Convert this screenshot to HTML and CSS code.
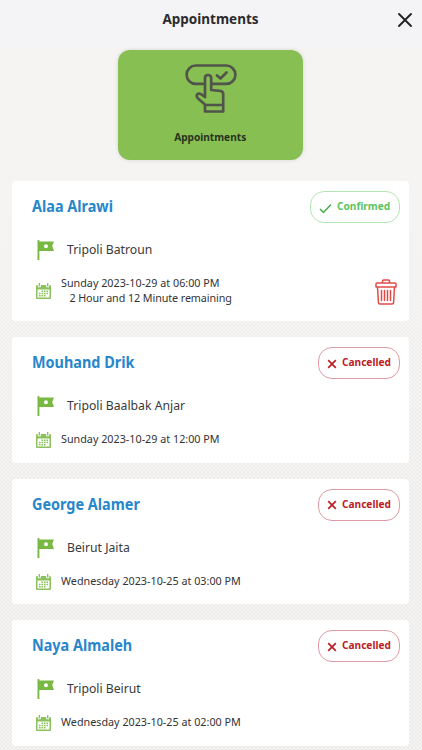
FILE: index.html
```html
<!DOCTYPE html>
<html lang="en">
<head>
<meta charset="utf-8">
<title>Appointments</title>
<link rel="stylesheet" href="styles.css">
</head>
<body>
<svg class="defs" aria-hidden="true">
  <symbol id="flag" viewBox="0 0 18 20"><path fill="currentColor" fill-rule="evenodd" d="M.5.3Q1.500-.3 2.400.3V1.500H17L15.200 6 17 10.900H2.400V20H.5zM9 4.200a2 2 0 1 0 0 4 2 2 0 0 0 0-4z"/></symbol>
  <symbol id="calendar" viewBox="0 0 15 16"><path fill="currentColor" fill-rule="evenodd" d="M1.200 2H1.800V4.300H4.800V2H10.200V4.300H13.200V2H13.800Q15 2 15 3.200V14.800Q15 16 13.800 16H1.200Q0 16 0 14.800V3.200Q0 2 1.200 2zM1.500 6.500V14.500H13.500V6.500z"/><path stroke="currentColor" stroke-width="1.300" d="M3.300 0V3.500M11.700 0V3.500"/><path fill="currentColor" d="M5.500 7.500h1.600v1.600H5.500zM8 7.500h1.600v1.600H8zM10.500 7.500h1.600v1.600h-1.600zM3 9.800h1.600v1.500H3zM5.500 9.800h1.600v1.500H5.500zM8 9.800h1.600v1.500H8zM10.500 9.800h1.600v1.500h-1.600zM3 12h1.600v1.500H3zM5.500 12h1.600v1.500H5.500zM8 12h1.600v1.500H8z"/></symbol>
  <symbol id="cross" viewBox="0 0 10 10"><path fill="none" stroke="currentColor" stroke-width="1.700" d="M1.200 1.200 8.800 8.800M8.800 1.200 1.200 8.800"/></symbol>
</svg>
<header class="topbar">
  <h1>Appointments</h1>
  <svg class="close" viewBox="0 0 16 16"><path fill="none" stroke="currentColor" stroke-width="1.900" stroke-linecap="round" d="M2 2 14 14M14 2 2 14"/></svg>
</header>
<main>
  <section class="tile">
    <svg class="tap" viewBox="0 0 52 50" fill="none" stroke="currentColor" stroke-width="2.700" stroke-linejoin="round" stroke-linecap="round">
      <path d="M19 19.900H10.800A9.200 9.200 0 0 1 10.800 1.500H41.200A9.200 9.200 0 0 1 41.200 19.900H27M32 11.500 35.500 14.500 41.500 8.500"/>
      <path d="M20 40.500 13 34.500Q10.500 31.500 12.500 30Q15 28.500 20 33V14Q20 11 23 11T26.200 14V26L35 26.800Q38.200 27.200 38.200 30V47.500H20zM20 41H38"/>
    </svg>
    <span class="tile-label">Appointments</span>
  </section>
  <div class="list">
    <article class="card card-tall">
      <div class="head"><h2>Alaa Alrawi</h2><span class="status confirmed"><svg viewBox="0 0 13 11"><path fill="none" stroke="currentColor" stroke-width="1.500" d="M1 6 4.500 9.500 12 1.500"/></svg><b>Confirmed</b></span></div>
      <div class="place"><svg><use href="#flag"/></svg><span>Tripoli Batroun</span></div>
      <div class="time"><svg class="cal"><use href="#calendar"/></svg><p>Sunday 2023-10-29 at 06:00 PM<br><span class="remaining">2 Hour and 12 Minute remaining</span></p>
        <svg class="trash" viewBox="0 0 22 26" fill="none" stroke="currentColor" stroke-width="1.500" stroke-linejoin="round" stroke-linecap="round"><path d="M7.500 4V2Q7.500 1 8.500 1H13.500Q14.500 1 14.500 2V4M2 4H20Q21 4 21 5V8H1V5Q1 4 2 4zM2.500 8 3.400 23.500Q3.500 25 5 25H17Q18.500 25 18.600 23.500L19.500 8M6.500 11.500V21.500M9.500 11.500V21.500M12.500 11.500V21.500M15.500 11.500V21.500"/></svg>
      </div>
    </article>
    <article class="card">
      <div class="head"><h2>Mouhand Drik</h2><span class="status cancelled"><svg><use href="#cross"/></svg><b>Cancelled</b></span></div>
      <div class="place"><svg><use href="#flag"/></svg><span>Tripoli Baalbak Anjar</span></div>
      <div class="time"><svg class="cal"><use href="#calendar"/></svg><p>Sunday 2023-10-29 at 12:00 PM</p></div>
    </article>
    <article class="card">
      <div class="head"><h2>George Alamer</h2><span class="status cancelled"><svg><use href="#cross"/></svg><b>Cancelled</b></span></div>
      <div class="place"><svg><use href="#flag"/></svg><span>Beirut Jaita</span></div>
      <div class="time"><svg class="cal"><use href="#calendar"/></svg><p>Wednesday 2023-10-25 at 03:00 PM</p></div>
    </article>
    <article class="card">
      <div class="head"><h2>Naya Almaleh</h2><span class="status cancelled"><svg><use href="#cross"/></svg><b>Cancelled</b></span></div>
      <div class="place"><svg><use href="#flag"/></svg><span>Tripoli Beirut</span></div>
      <div class="time"><svg class="cal"><use href="#calendar"/></svg><p>Wednesday 2023-10-25 at 02:00 PM</p></div>
    </article>
  </div>
</main>
</body>
</html>
```
FILE: styles.css
```css
* { box-sizing: border-box; margin: 0; }
body {
  height: 750px;
  overflow: hidden;
  font-family: "Noto Sans", "Open Sans", sans-serif;
  color: #2b2b2d;
  background:
    linear-gradient(#f5f4f2 0 170px, transparent 500px),
    radial-gradient(circle, #ebe9e7 0.6px, transparent 1.2px) 0 0 / 4px 4px,
    radial-gradient(circle, #ebe9e7 0.6px, transparent 1.2px) 2px 2px / 4px 4px,
    #f6f5f4;
}
.defs { display: none; }
svg { flex: none; }
.topbar {
  height: 48px;
  padding: 0 9px 10px 24px;
  display: flex;
  align-items: center;
  background: #f4f4f7;
}
h1 { flex: 1; text-align: center; font-size: 14.5px; font-weight: 700; line-height: 20px; margin-top: -2px; transform: scaleX(.93); }
.close { width: 16px; height: 16px; color: #222; margin-top: 2px; }
.tile {
  width: 185px;
  height: 110px;
  margin: 2px auto 21px 118px;
  padding-top: 14px;
  border-radius: 12px;
  background: #87bf52;
  box-shadow: 0 0 4px #0002;
  display: flex;
  flex-direction: column;
  align-items: center;
}
.tap { width: 52px; height: 50px; color: #50544a; }
.tile-label { margin-top: 15px; font-size: 11px; line-height: 16px; font-weight: 700; transform: scaleX(.92); color: #29321f; }
.list { padding: 0 13px 0 12px; display: flex; flex-direction: column; gap: 16px; }
.card {
  height: 125.600px;
  padding: 10px 9px 0 20px;
  border-radius: 4px;
  background: #fff;
}
.card-tall { height: 140.300px; }
.head { height: 32px; display: flex; align-items: flex-start; justify-content: space-between; }
h2 { font-size: 15.5px; line-height: 30px; font-weight: 700; transform: scaleX(.93); transform-origin: left; color: #2886cb; }
.status {
  height: 32px;
  border: 1px solid;
  border-radius: 14px;
  display: flex;
  align-items: center;
  padding-bottom: 2px;
  font-size: 11px;
}
.status b { transform: scaleX(.92); transform-origin: left; margin-top: -1px; }
.confirmed { width: 90px; padding-left: 8px; gap: 5px; border-color: #b2e6b3; color: #5bc45f; }
.confirmed svg { width: 13px; height: 11px; margin-top: 4px; color: #43ad48; }
.cancelled { width: 82px; padding-left: 8px; gap: 5px; border-color: #de9ba4; color: #bb2025; }
.cancelled svg { width: 10px; height: 10px; margin-top: 3px; }
.place { height: 20px; margin: 16px 0 0 5px; display: flex; align-items: flex-start; font-size: 13px; line-height: 20px; color: #39393b; }
.place span { transform: scaleX(.94); transform-origin: left; }
.place svg { width: 18px; height: 20px; margin: 1px 12px 0 0; color: #79b843; }
.time { margin: 14px 0 0 4px; display: flex; font-size: 11.5px; line-height: 15px; color: #333335; }
.time p { padding-top: 2px; white-space: nowrap; transform: scaleX(.937); transform-origin: left; }
.cal { width: 15px; height: 16px; margin: 3px 10px 0 0; color: #8bc15b; }
.card-tall .cal { margin-top: 10px; }
.remaining { margin-left: 9px; letter-spacing: -0.1px; }
.trash { width: 22px; height: 26px; margin: 6px 3px 0 auto; color: #e34b46; }
```
